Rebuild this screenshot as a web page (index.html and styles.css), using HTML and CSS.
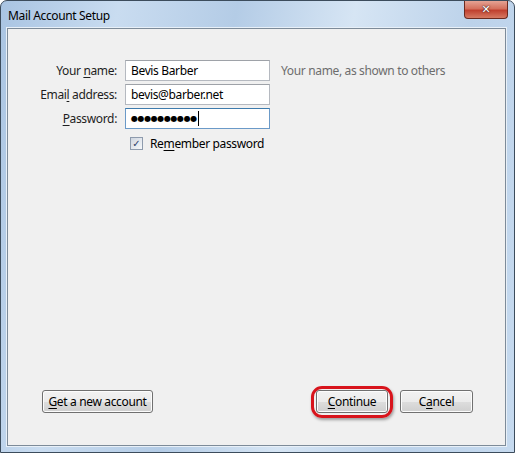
FILE: index.html
```html
<!doctype html>
<html lang="en">
<head>
    <meta charset="UTF-8">
    <title>Mail Account Setup</title>
    <link rel="stylesheet" href="styles.css">
</head>
<body>
  <div class="window">
    <div class="titlebar">
      <span class="title">Mail Account Setup</span>
      <span class="close">&#x2715;</span>
    </div>
    <div class="panel">
      <div class="form">
        <label class="label">Your <u>n</u>ame:</label>
        <div class="field">Bevis Barber</div>
        <span class="hint">Your name, as shown to others</span>

        <label class="label">Emai<u>l</u> address:</label>
        <div class="field">bevis@barber.net</div>
        <span></span>

        <label class="label"><u>P</u>assword:</label>
        <div class="field focused"><span class="dots">&#x25CF;&#x25CF;&#x25CF;&#x25CF;&#x25CF;&#x25CF;&#x25CF;&#x25CF;&#x25CF;&#x25CF;</span><span class="caret"></span></div>
        <span></span>

        <span></span>
        <div class="check-row">
          <span class="checkbox">&#x2713;</span>
          <span>Re<u>m</u>ember password</span>
        </div>
        <span></span>
      </div>

      <div class="footer">
        <button class="btn new-account"><u>G</u>et a new account</button>
        <div class="right">
          <span class="marked"><button class="btn continue"><u>C</u>ontinue</button></span>
          <button class="btn cancel">C<u>a</u>ncel</button>
        </div>
      </div>
    </div>
  </div>
</body>
</html>
```

FILE: styles.css
```css
html, body {
  margin: 0;
  padding: 0;
}
body {
  font-family: "Noto Sans", "Open Sans", sans-serif;
  font-size: 12px;
  letter-spacing: -0.35px;
  color: #000;
  background: #fff;
}
u {
  text-decoration: underline;
  text-underline-offset: 2px;
}
.window {
  width: 515px;
  height: 453px;
  box-sizing: border-box;
  display: flex;
  flex-direction: column;
  border: 1px solid #3c4c5c;
  border-radius: 7px 7px 0 0;
  background: linear-gradient(100deg, #a9c4e2 0%, #c9dcf0 20%, #b4cce6 40%, #d6e5f4 60%, #bcd2ea 80%, #c6daef 100%);
}
.titlebar {
  height: 27px;
  display: flex;
  align-items: flex-start;
  justify-content: space-between;
  padding-left: 7px;
}
.title {
  margin-top: 6px;
  font-size: 12px;
  color: #000;
}
.close {
  width: 44px;
  height: 18px;
  margin-right: 6px;
  box-sizing: border-box;
  border: 1px solid #6b2a20;
  border-top: none;
  border-radius: 0 0 4px 4px;
  background: linear-gradient(#e5a394 0%, #d4705d 45%, #c0402f 55%, #d67a63 100%);
  color: #fff;
  font-family: "DejaVu Sans", sans-serif;
  font-weight: bold;
  font-size: 11px;
  letter-spacing: 0;
  line-height: 17px;
  text-align: center;
  text-shadow: 0 0 1px #402020, 0 0 2px #402020;
}
.panel {
  flex: 1;
  margin: 0 8px 6px 6px;
  border: 1px solid #7d8b99;
  box-shadow: 0 0 0 1px #e8f0f8;
  background: #f0f0f0;
  display: flex;
  flex-direction: column;
}
.form {
  display: grid;
  grid-template-columns: 109px 145px 1fr;
  column-gap: 8px;
  row-gap: 3px;
  padding-top: 31px;
  align-items: center;
}
.label {
  text-align: right;
  color: #1e1e1e;
}
.field {
  height: 21px;
  box-sizing: border-box;
  border: 1px solid #b5b9c0;
  border-top-color: #9ea2a8;
  background: #fff;
  padding-left: 5px;
  line-height: 19px;
  white-space: nowrap;
  display: flex;
  align-items: center;
}
.field.focused {
  border-color: #6b9ac8;
  border-top-color: #3d7bad;
}
.dots {
  font-family: "DejaVu Sans", sans-serif;
  font-size: 8px;
  letter-spacing: -0.4px;
}
.caret {
  width: 1px;
  height: 15px;
  background: #000;
  margin-left: 1px;
}
.hint {
  color: #6d6d6d;
  padding-left: 3px;
  white-space: nowrap;
}
.check-row {
  display: flex;
  align-items: center;
  gap: 7px;
  margin-top: 3px;
  padding-left: 5px;
  white-space: nowrap;
}
.checkbox {
  width: 13px;
  height: 13px;
  box-sizing: border-box;
  border: 1px solid #8e9bad;
  background: linear-gradient(135deg, #cfd6e0, #f6f8fa);
  color: #2b3d6a;
  font-family: "DejaVu Sans", sans-serif;
  font-size: 10px;
  font-weight: bold;
  letter-spacing: 0;
  line-height: 11px;
  text-align: center;
}
.footer {
  margin-top: auto;
  display: flex;
  justify-content: space-between;
  align-items: center;
  padding: 0 32px 32px 34px;
}
.right {
  display: flex;
  gap: 12px;
  align-items: center;
}
.btn {
  height: 23px;
  box-sizing: border-box;
  border: 1px solid #707070;
  border-radius: 3px;
  background: linear-gradient(#f2f2f2 0%, #ebebeb 50%, #dddddd 51%, #cfcfcf 100%);
  box-shadow: inset 0 0 0 1px #fcfcfc;
  font-family: inherit;
  font-size: 12px;
  letter-spacing: inherit;
  color: #000;
  padding: 0 4px;
  white-space: nowrap;
}
.new-account {
  width: 111px;
}
.continue {
  width: 72px;
}
.cancel {
  width: 73px;
}
.marked {
  position: relative;
  display: flex;
}
.marked::after {
  content: "";
  position: absolute;
  left: -5px;
  right: -5px;
  top: -4px;
  bottom: -5px;
  border: 3px solid #d8141c;
  border-radius: 11px;
  box-shadow: 1px 2px 3px rgba(0, 0, 0, 0.35);
}
```
